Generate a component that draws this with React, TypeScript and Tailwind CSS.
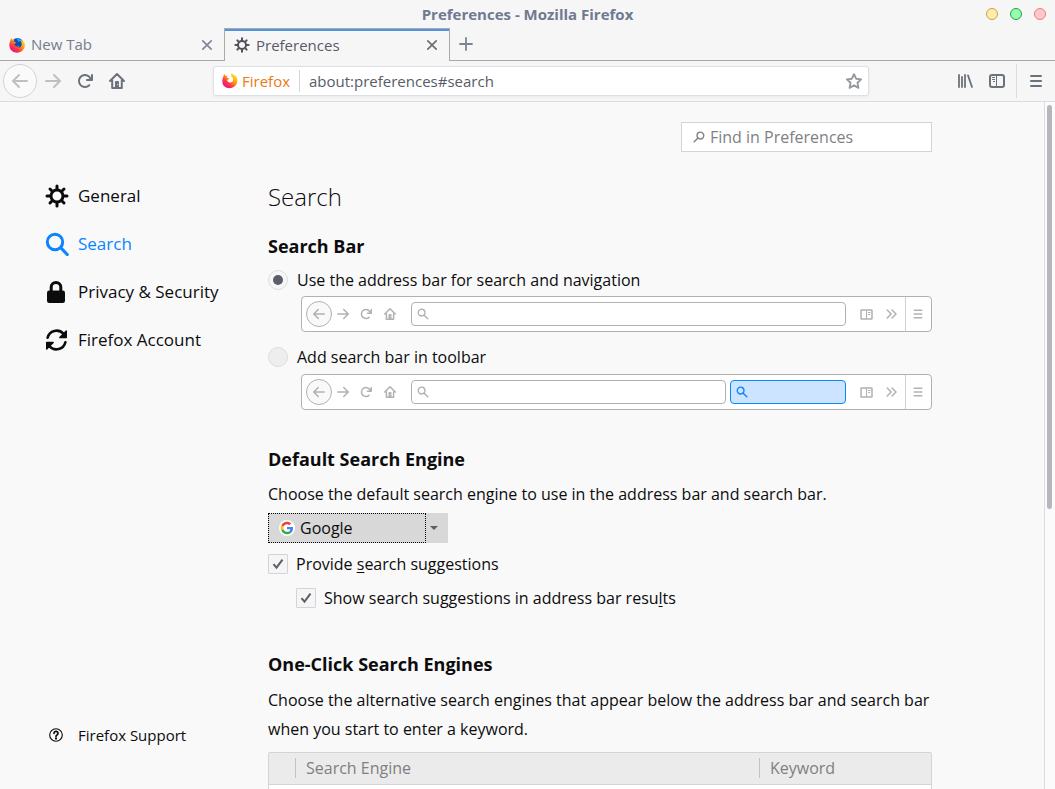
import React, { ReactNode } from "react";

type IconProps = { className?: string };

function Gear({ className = "" }: IconProps) {
  return (
    <svg viewBox="0 0 24 24" className={className} fill="none" stroke="currentColor" aria-hidden="true">
      <circle cx="12" cy="12" r="6" strokeWidth="3" />
      <path
        strokeWidth="3"
        strokeLinecap="round"
        d="M12 2v3M12 19v3M2 12h3M19 12h3M5 5l2 2M17 17l2 2M19 5l-2 2M7 17l-2 2"
      />
    </svg>
  );
}

function Magnifier({ className = "" }: IconProps) {
  return (
    <svg viewBox="0 0 24 24" className={className} fill="none" stroke="currentColor" aria-hidden="true">
      <circle cx="10" cy="10" r="7.7" strokeWidth="3" />
      <path strokeWidth="3.2" strokeLinecap="round" d="M16 16l6.2 6.5" />
    </svg>
  );
}

function Lens({ className = "" }: IconProps) {
  return (
    <svg viewBox="0 0 12 12" className={className} fill="none" stroke="currentColor" aria-hidden="true">
      <circle cx="4.6" cy="4.6" r="3.4" strokeWidth="1.3" />
      <path strokeWidth="1.4" strokeLinecap="round" d="M7.2 7.2l3.6 3.6" />
    </svg>
  );
}

function Padlock({ className = "" }: IconProps) {
  return (
    <svg viewBox="0 0 24 24" className={className} aria-hidden="true">
      <rect x="2" y="10.5" width="18" height="12.5" rx="2.2" fill="currentColor" />
      <path d="M6.2 12V7.2a4.8 4.8 0 0 1 9.6 0V12" fill="none" stroke="currentColor" strokeWidth="3" />
    </svg>
  );
}

function Sync({ className = "" }: IconProps) {
  return (
    <svg viewBox="0 0 24 24" className={className} fill="none" stroke="currentColor" aria-hidden="true">
      <path strokeWidth="2.6" strokeLinecap="round" d="M2.6 9.800A9.300 9.300 0 0 1 18.400 5.600M20.400 14.200A9.300 9.300 0 0 1 4.600 18.400" />
      <path fill="currentColor" strokeWidth="1.4" strokeLinejoin="round" d="M21.300 3v6.500h-6.500zM1.700 21v-6.500h6.500z" />
    </svg>
  );
}

function Back({ className = "" }: IconProps) {
  return (
    <svg viewBox="0 0 16 16" className={className} fill="currentColor" aria-hidden="true">
      <path d="M15 7H3.414l4.293-4.293a1 1 0 0 0-1.414-1.414l-6 6a1 1 0 0 0 0 1.414l6 6a1 1 0 0 0 1.414-1.414L3.414 9H15a1 1 0 0 0 0-2z" />
    </svg>
  );
}

function Forward({ className = "" }: IconProps) {
  return (
    <svg viewBox="0 0 16 16" className={className} fill="currentColor" aria-hidden="true">
      <path d="M1 7h11.586L8.293 2.707a1 1 0 0 1 1.414-1.414l6 6a1 1 0 0 1 0 1.414l-6 6a1 1 0 0 1-1.414-1.414L12.586 9H1a1 1 0 0 1 0-2z" />
    </svg>
  );
}

function Reload({ className = "" }: IconProps) {
  return (
    <svg viewBox="0 0 16 16" className={className} fill="currentColor" aria-hidden="true">
      <path d="M15 1a1 1 0 0 0-1 1v2.418A6.995 6.995 0 1 0 8 15a6.954 6.954 0 0 0 4.95-2.05 1 1 0 0 0-1.414-1.414A5.019 5.019 0 1 1 12.549 6H10a1 1 0 0 0 0 2h5a1 1 0 0 0 1-1V2a1 1 0 0 0-1-1z" />
    </svg>
  );
}

function Home({ className = "" }: IconProps) {
  return (
    <svg viewBox="0 0 16 16" className={className} fill="none" stroke="currentColor" aria-hidden="true">
      <path strokeWidth="2" strokeLinecap="round" strokeLinejoin="round" d="M1 8l7-7 7 7M3.2 7.5V15h9.6V7.5" />
      <path fill="currentColor" stroke="none" d="M6 15V9.2C6 8.5 6.5 8 7.2 8h1.6c.7 0 1.2.5 1.2 1.2V15z" />
      <circle cx="8.8" cy="11.5" r=".6" fill="#f6f6f7" stroke="none" />
    </svg>
  );
}

function MenuLines({ className = "" }: IconProps) {
  return (
    <svg viewBox="0 0 16 16" className={className} stroke="currentColor" aria-hidden="true">
      <path strokeWidth="2" strokeLinecap="round" d="M3 3h10M3 8h10M3 13h10" />
    </svg>
  );
}

function Library({ className = "" }: IconProps) {
  return (
    <svg viewBox="0 0 16 16" className={className} fill="none" stroke="currentColor" aria-hidden="true">
      <path strokeWidth="1.8" strokeLinecap="round" d="M2 2v12M5 4v10M8 2v12M11 2.400L15 14" />
    </svg>
  );
}

function SidebarIcon({ className = "" }: IconProps) {
  return (
    <svg viewBox="0 0 16 16" className={className} fill="none" stroke="currentColor" aria-hidden="true">
      <rect x="1" y="2" width="14" height="12" rx="2" strokeWidth="2" />
      <path strokeWidth="1" d="M7.500 3v10M3 4.500h3M3 6.500h3M4 8.500h2" />
    </svg>
  );
}

function Reader({ className = "" }: IconProps) {
  return (
    <svg viewBox="0 0 13 11" className={className} fill="none" stroke="currentColor" aria-hidden="true">
      <rect x="1" y="1" width="11" height="9" rx=".6" strokeWidth="1.5" />
      <path strokeWidth="1" d="M6.500 1v9M8 3.500h2.500M8 5.500h2" />
    </svg>
  );
}

function Chevrons({ className = "" }: IconProps) {
  return (
    <svg viewBox="0 0 11 10" className={className} fill="none" stroke="currentColor" aria-hidden="true">
      <path strokeWidth="1.5" strokeLinecap="round" strokeLinejoin="round" d="M1.2 1l4 4-4 4M6 1l4 4-4 4" />
    </svg>
  );
}

function Star({ className = "" }: IconProps) {
  return (
    <svg viewBox="0 0 16 16" className={className} fill="none" stroke="currentColor" aria-hidden="true">
      <path strokeWidth="1.9" strokeLinejoin="round" d="M8 1.2l2.1 4.5 5 .7-3.6 3.4.9 5L8 12.4l-4.4 2.4.9-5L.9 6.400l5-.7z" />
    </svg>
  );
}

function Cross({ className = "" }: IconProps) {
  return (
    <svg viewBox="0 0 12 12" className={className} stroke="currentColor" aria-hidden="true">
      <path strokeWidth="1.7" strokeLinecap="round" d="M1.800 1.800l8.400 8.400M10.200 1.800l-8.400 8.400" />
    </svg>
  );
}

function Plus({ className = "" }: IconProps) {
  return (
    <svg viewBox="0 0 14 14" className={className} stroke="currentColor" aria-hidden="true">
      <path strokeWidth="1.8" strokeLinecap="round" d="M7 1v12M1 7h12" />
    </svg>
  );
}

function Help({ className = "" }: IconProps) {
  return (
    <svg viewBox="0 0 16 16" className={className} fill="none" stroke="currentColor" aria-hidden="true">
      <circle cx="8" cy="8" r="7.2" strokeWidth="1.3" />
      <path strokeWidth="2" strokeLinecap="round" d="M5.700 6.100a2.300 2.200 0 1 1 3.400 1.900c-.8.4-1.100.8-1.100 1.500" />
      <circle cx="8" cy="12" r="1.300" fill="currentColor" stroke="none" />
    </svg>
  );
}

function FirefoxGlobe({ className = "" }: IconProps) {
  return (
    <svg viewBox="0 0 16 16" className={className} aria-hidden="true">
      <defs>
        <linearGradient id="fx-body" x1="0.85" y1="0.1" x2="0.2" y2="0.9">
          <stop offset="0" stopColor="#ffe226" />
          <stop offset="0.4" stopColor="#ff980e" />
          <stop offset="0.72" stopColor="#ff3647" />
          <stop offset="1" stopColor="#e31587" />
        </linearGradient>
      </defs>
      <circle cx="8.500" cy="6.800" r="5.900" fill="#0a4fb5" />
      <path fill="#1f9af0" d="M7 1.200a6 6 0 0 1 5.500 2.300L9.500 5z" />
      <path
        fill="url(#fx-body)"
        d="M1.600 3c0-.8.3-1.500.7-1.900.2.800.6 1.300 1.100 1.700.8-.3 1.700-.2 2.400.2-.9.500-1.100 1.100-1 1.700.7.300 1.700.3 2.400.5-.1.900-1.300 1.300-1.900 1.800.2 1.900 1.800 2.700 3.200 2.400.9-.1 1.500-.4 2.300-.1-.7 1.500-2.200 1.700-3.200 1.500 3.200 1.100 5.600-1.600 5-4.500-.2-1.500-.9-2.700-2-3.500 1.900.3 3.200 1.600 3.900 3 .1-.9-.1-1.700-.5-2.500 2.700 3 2.300 7.300-.2 9.900-3.200 3.500-9.100 3.300-12-.5C-.2 10 .1 5.900 1.600 3z"
      />
    </svg>
  );
}

function FirefoxMark({ className = "" }: IconProps) {
  return (
    <svg viewBox="0 0 16 16" className={className} aria-hidden="true">
      <path
        fill="url(#fx-body)"
        d="M1.600 3c0-.8.3-1.500.7-1.900.2.800.6 1.300 1.100 1.700.8-.3 1.700-.2 2.400.2-.9.500-1.100 1.100-1 1.700.7.300 1.700.3 2.400.5-.1.900-1.300 1.300-1.900 1.800.2 1.900 1.800 2.700 3.200 2.400 2-.3 2.900-1.600 2.700-3.300-.2-1.400-1-2-2-2.400.5-1.300.3-2.300-.5-3.200 2 .2 3.100 1.300 3.500 2.400.3-.4.400-.8.300-1.300 3.200 2.600 4.100 7.600.8 11.200-3.200 3.500-9.100 3.300-12-.5C-.2 10 .1 5.900 1.600 3z"
      />
    </svg>
  );
}

function GoogleMark({ className = "" }: IconProps) {
  return (
    <svg viewBox="0 0 16 16" className={className} aria-hidden="true">
      <circle cx="8" cy="8" r="8" fill="#fff" />
      <g transform="translate(1.700 1.700) scale(.2625)">
        <path fill="#EA4335" d="M24 9.500c3.540 0 6.710 1.220 9.210 3.600l6.850-6.850C35.900 2.380 30.470 0 24 0 14.620 0 6.510 5.380 2.560 13.220l7.980 6.190C12.430 13.720 17.740 9.500 24 9.500z" />
        <path fill="#4285F4" d="M46.980 24.550c0-1.570-.15-3.090-.38-4.550H24v9.020h12.940c-.58 2.960-2.260 5.480-4.780 7.180l7.730 6c4.510-4.180 7.090-10.360 7.090-17.650z" />
        <path fill="#FBBC05" d="M10.530 28.590c-.48-1.450-.76-2.990-.76-4.590s.27-3.140.76-4.590l-7.980-6.190C.92 16.460 0 20.120 0 24c0 3.880.92 7.540 2.560 10.780l7.970-6.190z" />
        <path fill="#34A853" d="M24 48c6.480 0 11.930-2.130 15.890-5.810l-7.730-6c-2.150 1.450-4.920 2.300-8.160 2.300-6.260 0-11.570-4.220-13.470-9.910l-7.980 6.190C6.510 42.620 14.620 48 24 48z" />
      </g>
    </svg>
  );
}

function ToolButton({ label, className = "", children }: { label: string; className?: string; children: ReactNode }) {
  return (
    <button type="button" aria-label={label} className={`flex h-8 w-8 shrink-0 items-center justify-center ${className}`}>
      {children}
    </button>
  );
}

function TitleBar() {
  return (
    <header className="relative flex h-7 shrink-0 items-center justify-center">
      <h1 className="text-[15px] font-bold text-[#6f7a90]">Preferences - Mozilla Firefox</h1>
      <div className="absolute right-[9px] flex gap-3">
        <button type="button" aria-label="Minimize" className="size-3 rounded-full border border-[#d3a12c] bg-[#fdeeb0]" />
        <button type="button" aria-label="Maximize" className="size-3 rounded-full border border-[#1ea63c] bg-[#96fcb0]" />
        <button type="button" aria-label="Close" className="size-3 rounded-full border border-[#f5777a] bg-[#ffc9cb]" />
      </div>
    </header>
  );
}

function TabStrip() {
  return (
    <div className="flex h-[33px] shrink-0 text-[15px]" role="tablist">
      <div role="tab" aria-selected="false" className="flex w-56 items-center border-b border-[#a9a9a9] pt-px pr-[11px] pl-[9px] text-[#747d8d]">
        <FirefoxGlobe className="size-4" />
        <span className="ml-1.5 flex-1">New Tab</span>
        <button type="button" aria-label="Close New Tab">
          <Cross className="size-3 text-[#80889a]" />
        </button>
      </div>
      <div role="tab" aria-selected="true" className="w-[226px] border-x border-t border-[#a9a9a9] text-[#565c68]">
        <div className="flex h-8 items-center border-t-2 border-[#5294e2] pr-[11px] pb-0.5 pl-[9px]">
          <Gear className="size-4 text-[#50535c]" />
          <span className="ml-1.5 flex-1">Preferences</span>
          <button type="button" aria-label="Close Preferences">
            <Cross className="size-3 text-[#6c6f76]" />
          </button>
        </div>
      </div>
      <div className="flex flex-1 items-center border-b border-[#a9a9a9] pl-[9px]">
        <button type="button" aria-label="Open a new tab">
          <Plus className="size-3.5 text-[#7d8593]" />
        </button>
      </div>
    </div>
  );
}

function NavBar() {
  return (
    <div className="flex h-[41px] shrink-0 items-center border-b border-[#d9dce2] text-[#6c727c]">
      <button
        type="button"
        aria-label="Back"
        className="ml-[3px] flex size-[34px] shrink-0 items-center justify-center rounded-full border border-[#d2d3d5] bg-[#fafafa] text-[#bfc0c2]"
      >
        <Back className="size-4" />
      </button>
      <ToolButton label="Forward" className="text-[#bfc0c2]">
        <Forward className="size-4" />
      </ToolButton>
      <ToolButton label="Reload">
        <Reload className="size-4" />
      </ToolButton>
      <ToolButton label="Home">
        <Home className="size-4" />
      </ToolButton>
      <div className="w-20 shrink-0" />
      <div className="flex h-[30px] min-w-0 flex-1 items-center rounded-[3px] border border-[#dcdfe6] bg-white pr-1.5 pl-2 text-[15px] shadow-[0_1px_3px_rgba(0,0,0,0.06)]">
        <FirefoxMark className="size-4 shrink-0" />
        <span className="ml-1 w-[58px] border-r border-[#d4d6da] text-[#ea7a13]">Firefox</span>
        <input
          aria-label="Address"
          defaultValue="about:preferences#search"
          className="ml-[9px] min-w-0 flex-1 bg-transparent text-[#565c66] outline-none"
        />
        <button type="button" aria-label="Bookmark this page">
          <Star className="size-4 text-[#96999d]" />
        </button>
      </div>
      <div className="w-20 shrink-0" />
      <ToolButton label="Library">
        <Library className="size-4" />
      </ToolButton>
      <ToolButton label="Sidebars">
        <SidebarIcon className="size-4" />
      </ToolButton>
      <div className="ml-[3px] h-[34px] w-px bg-[#d9dce2]" />
      <ToolButton label="Open menu" className="mr-[3px] ml-[3px]">
        <MenuLines className="size-4" />
      </ToolButton>
    </div>
  );
}

function NavItem({ icon, label, active = false }: { icon: ReactNode; label: string; active?: boolean }) {
  return (
    <li>
      <a href={`#${label}`} className={`flex h-6 items-center gap-[9px] text-[17px] ${active ? "text-[#0a84ff]" : "text-[#0c0c0d]"}`}>
        {icon}
        {label}
      </a>
    </li>
  );
}

function SideNav() {
  return (
    <nav className="flex w-[268px] shrink-0 flex-col justify-between pt-[82px] pb-[42px] pl-[45px]">
      <ul className="flex flex-col gap-6">
        <NavItem icon={<Gear className="size-6" />} label="General" />
        <NavItem icon={<Magnifier className="size-6" />} label="Search" active />
        <NavItem icon={<Padlock className="size-6" />} label="Privacy & Security" />
        <NavItem icon={<Sync className="size-6" />} label="Firefox Account" />
      </ul>
      <a href="#support" className="flex h-6 items-center gap-[9px] text-[15px]">
        <span className="flex w-6 justify-center pr-0.5">
          <Help className="size-3.5" />
        </span>
        Firefox Support
      </a>
    </nav>
  );
}

function ToolbarPreview({ withSearch = false }: { withSearch?: boolean }) {
  return (
    <div className="ml-[33px] flex h-9 items-center rounded-[4px] border border-[#b1b1b3] bg-white pl-1 text-[#b1b1b3]">
      <span className="flex size-[26px] items-center justify-center rounded-full border border-[#b1b1b3] bg-[#f9f9fa]">
        <Back className="size-3" />
      </span>
      <span className="flex w-[22px] justify-center">
        <Forward className="size-3" />
      </span>
      <span className="flex w-6 justify-center">
        <Reload className="size-3" />
      </span>
      <span className="flex w-6 justify-center">
        <Home className="size-3" />
      </span>
      <span className="ml-[9px] flex h-6 flex-1 items-center rounded-[4px] border border-[#b1b1b3] pl-[5px]">
        <Lens className="size-3" />
      </span>
      {withSearch && (
        <span className="ml-1 flex h-6 w-[116px] items-center rounded-[4px] border border-[#0a84ff] bg-[#cce4ff] pl-[5px] text-[#0a84ff]">
          <Lens className="size-3" />
        </span>
      )}
      <span className="ml-2 flex w-[25px] justify-center">
        <Reader className="h-[11px] w-[13px]" />
      </span>
      <span className="flex w-6 justify-center">
        <Chevrons className="h-2.5 w-[11px]" />
      </span>
      <span className="ml-0.5 flex h-full w-[26px] items-center justify-center border-l border-[#d0d0d2] pr-px">
        <MenuLines className="h-3 w-4" />
      </span>
    </div>
  );
}

function Radio({ id, label, checked = false }: { id: string; label: string; checked?: boolean }) {
  return (
    <div className="flex h-6 items-center gap-[9px]">
      <input
        type="radio"
        name="searchbar"
        id={id}
        defaultChecked={checked}
        className="grid size-5 appearance-none place-content-center rounded-full border border-[#dcdde0] bg-[#eeeeef] before:size-2.5 before:rounded-full checked:bg-[#f6f6f7] checked:before:bg-[#5b5d68]"
      />
      <label htmlFor={id}>{label}</label>
    </div>
  );
}

function Check({ id, className = "", children }: { id: string; className?: string; children: ReactNode }) {
  return (
    <div className={`flex h-6 items-center gap-2 ${className}`}>
      <span className="grid size-5">
        <input
          type="checkbox"
          id={id}
          defaultChecked
          className="peer col-start-1 row-start-1 size-5 appearance-none rounded-[1px] border border-[#d3d4d8] bg-[#f5f5f6]"
        />
        <svg
          viewBox="0 0 20 20"
          className="pointer-events-none invisible col-start-1 row-start-1 size-5 peer-checked:visible"
          fill="none"
          stroke="#5b5d68"
          strokeWidth="2"
          aria-hidden="true"
        >
          <path d="M5.500 10.200l3 3.500 6-8" />
        </svg>
      </span>
      <label htmlFor={id}>{children}</label>
    </div>
  );
}

function SectionTitle({ className = "", children }: { className?: string; children: ReactNode }) {
  return <h3 className={`text-lg leading-6 font-bold ${className}`}>{children}</h3>;
}

function SearchPane() {
  return (
    <main className="w-full max-w-[664px] min-w-0 pt-5">
      <div className="flex justify-end">
        <div className="flex h-[30px] w-[251px] items-center border border-[#d3d4d8] bg-white pl-[11px] text-[#808085]">
          <Lens className="size-3 -scale-x-100" />
          <input
            aria-label="Find in Preferences"
            placeholder="Find in Preferences"
            className="ml-[5px] min-w-0 flex-1 bg-transparent outline-none placeholder:text-[#808085]"
          />
        </div>
      </div>
      <h2 className="mt-[30px] text-2xl leading-[30px] font-light">Search</h2>

      <SectionTitle className="mt-[22px]">Search Bar</SectionTitle>
      <div className="mt-2.5 flex flex-col gap-1">
        <Radio id="unified" label="Use the address bar for search and navigation" checked />
        <ToolbarPreview />
      </div>
      <div className="mt-[13px] flex flex-col gap-[5px]">
        <Radio id="separate" label="Add search bar in toolbar" />
        <ToolbarPreview withSearch />
      </div>

      <SectionTitle className="mt-[37px]">Default Search Engine</SectionTitle>
      <p className="mt-[9px] leading-[29px]">Choose the default search engine to use in the address bar and search bar.</p>
      <div className="relative mt-1 h-[30px] w-[180px]">
        <select aria-label="Default search engine" className="size-full appearance-none bg-[#d8d8d8] pl-8 outline-none">
          <option>Google</option>
        </select>
        <span className="pointer-events-none absolute inset-y-0 left-0 flex w-[158px] items-center border border-dotted border-black pl-2.5">
          <GoogleMark className="size-4" />
        </span>
        <svg viewBox="0 0 8 4" className="pointer-events-none absolute top-[13px] right-2.5 h-1 w-2" aria-hidden="true">
          <path d="M0 0h8L4 4z" fill="#5b5d68" />
        </svg>
      </div>
      <Check id="suggestions" className="mt-[9px]">
        Provide <span className="underline underline-offset-2">s</span>earch suggestions
      </Check>
      <Check id="urlbar-suggestions" className="mt-2.5 ml-7">
        Show search suggestions in address bar resu<span className="underline underline-offset-2">l</span>ts
      </Check>

      <SectionTitle className="mt-[42px]">One-Click Search Engines</SectionTitle>
      <p className="mt-2.5 leading-[29px]">
        Choose the alternative search engines that appear below the address bar and search bar when you start to enter a keyword.
      </p>
      <div className="mt-2 rounded-t-[2px] border border-[#d3d4d8] bg-white">
        <table className="w-full table-fixed text-left text-[#808080]">
          <thead className="h-[31px] border-b border-[#d3d4d8] bg-[#ebebeb]">
            <tr>
              <th aria-label="Shown" className="w-[26px]" />
              <th className="p-0 font-normal">
                <div className="border-l border-[#c2c2c4] pl-2.5 leading-5">Search Engine</div>
              </th>
              <th className="w-[172px] p-0 font-normal">
                <div className="border-l border-[#c2c2c4] pl-2.5 leading-5">Keyword</div>
              </th>
            </tr>
          </thead>
          <tbody>
            <tr className="h-8">
              <td />
              <td />
              <td />
            </tr>
          </tbody>
        </table>
      </div>
    </main>
  );
}

export default function App() {
  return (
    <div className="flex h-screen flex-col overflow-hidden bg-[#f6f6f7] font-['Open_Sans',sans-serif] text-[#0c0c0d]">
      <TitleBar />
      <TabStrip />
      <NavBar />
      <div className="flex min-h-0 flex-1 overflow-hidden bg-[#f9f9fa] text-base">
        <SideNav />
        <SearchPane />
        <div className="ml-auto w-[11px] shrink-0 border-l border-[#d9dce2] bg-[#fbfbfc] pt-[3px] pl-0.5">
          <div className="h-[59%] w-[5px] rounded-full bg-[#b5b7bc]" />
        </div>
      </div>
    </div>
  );
}
